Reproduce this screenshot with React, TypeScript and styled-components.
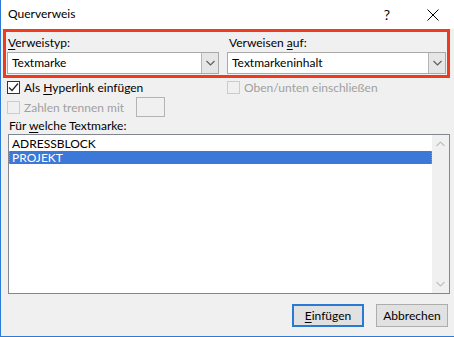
import React from "react";
import styled, { createGlobalStyle } from "styled-components";

const Global = createGlobalStyle`
  html, body { margin: 0; padding: 0; background: #f0f0f0; }
  body { font-family: "Lato", "Noto Sans", "Liberation Sans", sans-serif; font-size: 12px; color: #000; }
  * { box-sizing: border-box; }
`;

const Window = styled.div`
  width: 454px;
  height: 337px;
  background: #f0f0f0;
  border-left: 1px solid #2b7ad6;
  border-bottom: 1px solid #2b7ad6;
  display: flex;
  flex-direction: column;
`;

const TitleBar = styled.div`
  height: 29px;
  background: #fff;
  display: flex;
  align-items: center;
  padding-left: 7px;
  flex-shrink: 0;
`;

const Title = styled.div`
  flex: 1;
  line-height: 16px;
  margin-top: -1px;
`;

const TitleButton = styled.div<{ $w: number }>`
  width: ${(p) => p.$w}px;
  height: 29px;
  display: flex;
  align-items: center;
  justify-content: center;
  font-size: 14px;
  color: #000;
`;

const Body = styled.div`
  flex: 1;
  display: flex;
  flex-direction: column;
  padding: 0 4px 0 2px;
`;

const Highlight = styled.div`
  border: 3px solid #ee3a1d;
  padding: 3px 0 0 1px;
  display: grid;
  grid-template-columns: 212px 219px;
  column-gap: 8px;
  height: 49px;
`;

const Field = styled.div`
  display: flex;
  flex-direction: column;
  gap: 1px;
`;

const Label = styled.div<{ $pad?: number }>`
  line-height: 16px;
  height: 16px;
  padding-left: ${(p) => p.$pad ?? 1}px;
  white-space: nowrap;
`;

const U = styled.span`
  text-decoration: underline;
  text-underline-offset: 2px;
`;

const Select = styled.div`
  height: 22px;
  border: 1px solid #a9a9a9;
  background: #fff;
  display: flex;
  align-items: stretch;
`;

const SelectText = styled.div`
  flex: 1;
  line-height: 20px;
  padding-left: 4px;
`;

const DropButton = styled.div`
  width: 17px;
  background: #e6e6e6;
  border-left: 1px solid #b5b5b5;
  display: flex;
  align-items: center;
  justify-content: center;
`;

const Options = styled.div`
  display: grid;
  grid-template-columns: 220px 1fr;
  padding: 0 0 0 4px;
  margin-top: 1px;
`;

const OptCol = styled.div`
  display: flex;
  flex-direction: column;
  gap: 4px;
`;

const CheckRow = styled.div<{ $disabled?: boolean }>`
  display: flex;
  align-items: center;
  height: 16px;
  color: ${(p) => (p.$disabled ? "#a0a0a0" : "#000")};
  white-space: nowrap;
`;

const Box = styled.div<{ $disabled?: boolean }>`
  width: 13px;
  height: 13px;
  border: 1px solid ${(p) => (p.$disabled ? "#cccccc" : "#333333")};
  background: ${(p) => (p.$disabled ? "#f0f0f0" : "#fff")};
  margin-right: 4px;
  display: flex;
  align-items: center;
  justify-content: center;
  flex-shrink: 0;
`;

const SmallInput = styled.div`
  width: 29px;
  height: 20px;
  border: 1px solid #b4b4b4;
  background: #f0f0f0;
  margin-left: 12px;
`;

const ListLabel = styled.div`
  line-height: 16px;
  padding-left: 6px;
  margin-top: 3px;
`;

const ListBox = styled.div`
  margin-left: 5px;
  width: 442px;
  height: 160px;
  border: 1px solid #828790;
  background: #fff;
  display: flex;
`;

const Items = styled.div`
  flex: 1;
  padding-top: 2px;
`;

const Item = styled.div<{ $sel?: boolean }>`
  height: 13px;
  line-height: 13px;
  padding-left: 2px;
  background: ${(p) => (p.$sel ? "#3c78d8" : "transparent")};
  color: ${(p) => (p.$sel ? "#fff" : "#000")};
  border: 1px dotted ${(p) => (p.$sel ? "#d8883a" : "transparent")};
  border-width: 0 1px;
  margin-top: ${(p) => (p.$sel ? 1 : 0)}px;
`;

const ScrollBar = styled.div`
  width: 17px;
  background: #f0f0f0;
  display: flex;
  flex-direction: column;
  justify-content: space-between;
  align-items: center;
  padding: 6px 0 6px;
`;

const Footer = styled.div`
  display: flex;
  justify-content: flex-end;
  gap: 12px;
  padding: 10px 2px 0 0;
`;

const Button = styled.div<{ $default?: boolean }>`
  width: 72px;
  height: 23px;
  background: #e1e1e1;
  border: ${(p) => (p.$default ? "2px solid #2a7ad4" : "1px solid #adadad")};
  display: flex;
  align-items: center;
  justify-content: center;
`;

const Chevron = ({ dir = "down", color = "#606060" }: { dir?: "down" | "up"; color?: string }) => (
  <svg width="9" height="6" viewBox="0 0 9 6">
    <polyline
      points={dir === "down" ? "0.5,1 4.5,5 8.5,1" : "0.5,5 4.5,1 8.5,5"}
      fill="none"
      stroke={color}
      strokeWidth="1.2"
    />
  </svg>
);

const Check = () => (
  <svg width="11" height="11" viewBox="0 0 11 11">
    <polyline points="1,5.5 4,8.5 10,1.5" fill="none" stroke="#222" strokeWidth="1.2" />
  </svg>
);

export default function App() {
  return (
    <>
      <Global />
      <Window>
        <TitleBar>
          <Title>Querverweis</Title>
          <TitleButton $w={50}>?</TitleButton>
          <TitleButton $w={42}>
            <svg width="12" height="12" viewBox="0 0 12 12">
              <path d="M0.5 0.5 L11.5 11.5 M11.5 0.5 L0.5 11.5" stroke="#000" strokeWidth="1" />
            </svg>
          </TitleButton>
        </TitleBar>
        <Body>
          <Highlight>
            <Field>
              <Label>
                <U>V</U>erweistyp:
              </Label>
              <Select>
                <SelectText>Textmarke</SelectText>
                <DropButton>
                  <Chevron />
                </DropButton>
              </Select>
            </Field>
            <Field>
              <Label $pad={2}>
                Verweisen <U>a</U>uf:
              </Label>
              <Select>
                <SelectText>Textmarkeninhalt</SelectText>
                <DropButton>
                  <Chevron />
                </DropButton>
              </Select>
            </Field>
          </Highlight>
          <Options>
            <OptCol>
              <CheckRow>
                <Box>
                  <Check />
                </Box>
                <span>
                  Als <U>H</U>yperlink einfügen
                </span>
              </CheckRow>
              <CheckRow $disabled>
                <Box $disabled />
                <span>Zahlen trennen mit</span>
                <SmallInput />
              </CheckRow>
            </OptCol>
            <OptCol>
              <CheckRow $disabled>
                <Box $disabled />
                <span>Oben/unten einschließen</span>
              </CheckRow>
            </OptCol>
          </Options>
          <ListLabel>
            Für <U>w</U>elche Textmarke:
          </ListLabel>
          <ListBox>
            <Items>
              <Item>ADRESSBLOCK</Item>
              <Item $sel>PROJEKT</Item>
            </Items>
            <ScrollBar>
              <Chevron dir="up" color="#c0c0c0" />
              <Chevron dir="down" color="#c0c0c0" />
            </ScrollBar>
          </ListBox>
          <Footer>
            <Button $default>
              <span>
                <U>E</U>infügen
              </span>
            </Button>
            <Button>Abbrechen</Button>
          </Footer>
        </Body>
      </Window>
    </>
  );
}
